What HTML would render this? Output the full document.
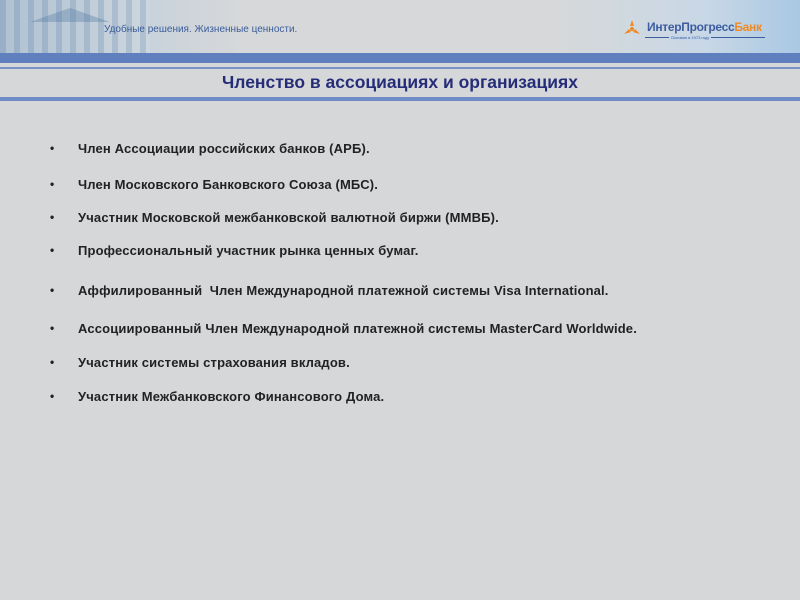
<!DOCTYPE html>
<html><head><meta charset="utf-8"><style>
*{margin:0;padding:0}
body{width:800px;height:600px;background:#d6d7d9;position:relative;overflow:hidden;font-family:"Liberation Sans",Arial,sans-serif}
.hdr{position:absolute;left:0;top:0;width:800px;height:53px;background:linear-gradient(90deg,#a9bccf 0%,#c8d2db 18%,#d6d8da 30%,#d6d8da 70%,#c9d8e6 88%,#a9c8e4 100%)}
.bld{position:absolute;left:0;top:0;width:150px;height:53px;background:repeating-linear-gradient(90deg,rgba(90,130,170,.22) 0 6px,rgba(255,255,255,.08) 6px 14px)}
.roof{position:absolute;left:30px;top:8px;width:0;height:0;border-left:40px solid transparent;border-right:40px solid transparent;border-bottom:14px solid rgba(80,120,160,.35)}
.slogan{position:absolute;left:104px;top:24px;font-size:10px;color:#3a5d9a}
.bar1{position:absolute;left:0;top:53px;width:800px;height:10px;background:#5f7fbf}
.line1{position:absolute;left:0;top:67px;width:800px;height:2px;background:#7a94c8}
.line2{position:absolute;left:0;top:97px;width:800px;height:4px;background:#6f8cc6}
h1{position:absolute;left:0;width:800px;text-align:center;top:72px;font-size:17.5px;color:#262d78;font-weight:bold}
.logo{position:absolute;left:647px;top:20px;font-size:12px;font-weight:bold;color:#3d5da0;letter-spacing:-.3px}
.logo span{color:#f08a24}
.sub{position:absolute;left:645px;top:37px;width:120px;height:1px;background:#3d5da0}
.sub2{position:absolute;left:669px;top:35px;font-size:4px;color:#3d5da0;background:#c4d6e8;padding:0 2px}
ul{list-style:none}
li{position:absolute;left:78px;font-size:13px;letter-spacing:0.15px;font-weight:bold;color:#222}
li:before{content:"•";position:absolute;left:-28px;font-size:12px}
</style></head><body>
<div class="hdr"><div class="bld"></div><div class="roof"></div></div>
<div class="slogan">Удобные решения. Жизненные ценности.</div>
<svg style="position:absolute;left:623px;top:20px" width="18" height="16" viewBox="0 0 18 16"><g fill="#f08a24"><path d="M9 0 L11 6 L7 6Z"/><path d="M1 14 L6 9 L8 12Z"/><path d="M17 14 L12 9 L10 12Z"/><circle cx="9" cy="9" r="2"/></g></svg>
<div class="logo">ИнтерПрогресс<span>Банк</span></div>
<div class="sub"></div><div class="sub2">Основан в 1973 году</div>
<div class="bar1"></div><div class="line1"></div>
<h1>Членство в ассоциациях и организациях</h1>
<div class="line2"></div>
<ul>
<li style="top:141px">Член Ассоциации российских банков (АРБ).</li>
<li style="top:177px">Член Московского Банковского Союза (МБС).</li>
<li style="top:210px">Участник Московской межбанковской валютной биржи (ММВБ).</li>
<li style="top:243px">Профессиональный участник рынка ценных бумаг.</li>
<li style="top:283px">Аффилированный &nbsp;Член Международной платежной системы Visa International.</li>
<li style="top:321px">Ассоциированный Член Международной платежной системы MasterCard Worldwide.</li>
<li style="top:355px">Участник системы страхования вкладов.</li>
<li style="top:389px">Участник Межбанковского Финансового Дома.</li>
</ul>
</body></html>
